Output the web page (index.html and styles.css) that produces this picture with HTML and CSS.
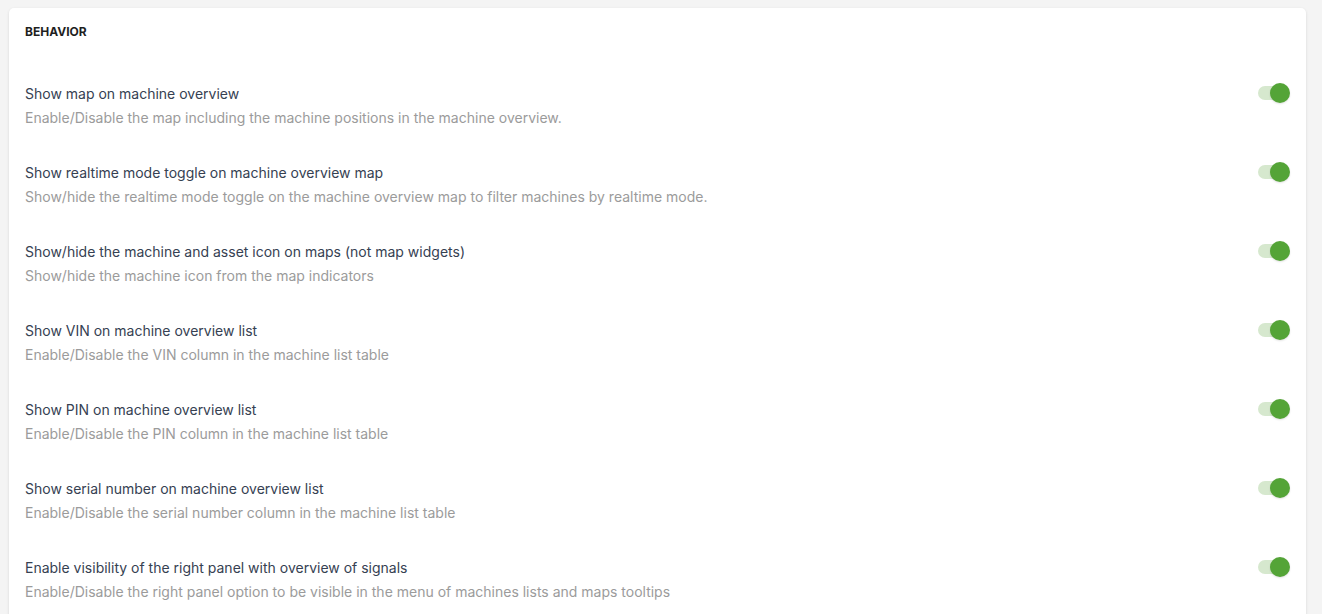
FILE: index.html
```html
<!DOCTYPE html>
<html>
<head>
<meta charset="utf-8">
<link rel="stylesheet" href="styles.css">
</head>
<body>
<div class="card">
  <div class="heading">BEHAVIOR</div>
  <div class="row">
    <div class="text">
      <div class="title">Show map on machine overview</div>
      <div class="desc">Enable/Disable the map including the machine positions in the machine overview.</div>
    </div>
    <div class="toggle"><span class="track"></span><span class="knob"></span></div>
  </div>
  <div class="row">
    <div class="text">
      <div class="title">Show realtime mode toggle on machine overview map</div>
      <div class="desc">Show/hide the realtime mode toggle on the machine overview map to filter machines by realtime mode.</div>
    </div>
    <div class="toggle"><span class="track"></span><span class="knob"></span></div>
  </div>
  <div class="row">
    <div class="text">
      <div class="title">Show/hide the machine and asset icon on maps (not map widgets)</div>
      <div class="desc">Show/hide the machine icon from the map indicators</div>
    </div>
    <div class="toggle"><span class="track"></span><span class="knob"></span></div>
  </div>
  <div class="row">
    <div class="text">
      <div class="title">Show VIN on machine overview list</div>
      <div class="desc">Enable/Disable the VIN column in the machine list table</div>
    </div>
    <div class="toggle"><span class="track"></span><span class="knob"></span></div>
  </div>
  <div class="row">
    <div class="text">
      <div class="title">Show PIN on machine overview list</div>
      <div class="desc">Enable/Disable the PIN column in the machine list table</div>
    </div>
    <div class="toggle"><span class="track"></span><span class="knob"></span></div>
  </div>
  <div class="row">
    <div class="text">
      <div class="title">Show serial number on machine overview list</div>
      <div class="desc">Enable/Disable the serial number column in the machine list table</div>
    </div>
    <div class="toggle"><span class="track"></span><span class="knob"></span></div>
  </div>
  <div class="row">
    <div class="text">
      <div class="title">Enable visibility of the right panel with overview of signals</div>
      <div class="desc">Enable/Disable the right panel option to be visible in the menu of machines lists and maps tooltips</div>
    </div>
    <div class="toggle"><span class="track"></span><span class="knob"></span></div>
  </div>
</div>
</body>
</html>
```
FILE: styles.css
```css
html, body {
  margin: 0;
  height: 100%;
  overflow: hidden;
}
body {
  background: #f4f4f4;
  padding: 8px 16px 0 9px;
  font-family: Inter, "Noto Sans", sans-serif;
  box-sizing: border-box;
}
.card {
  background: #ffffff;
  border-radius: 5px;
  box-shadow: 0 1px 3px rgba(0, 0, 0, 0.12);
  padding: 16px 16px 40px 16px;
}
.heading {
  font-size: 12px;
  font-weight: 700;
  line-height: 16px;
  color: #1f1f1f;
  margin-bottom: 26px;
}
.row {
  display: flex;
  align-items: flex-start;
  justify-content: space-between;
  padding: 18px 0 17px 0;
}
.text {
  display: flex;
  flex-direction: column;
  gap: 4px;
}
.title {
  font-size: 14px;
  line-height: 20px;
  color: #364152;
}
.desc {
  font-size: 14px;
  line-height: 20px;
  color: #9b9b9b;
}
.toggle {
  position: relative;
  width: 32px;
  height: 20px;
  margin-top: -1px;
  flex-shrink: 0;
}
.track {
  position: absolute;
  left: 0;
  top: 3px;
  width: 30px;
  height: 14px;
  border-radius: 7px;
  background: #d6e8ce;
}
.knob {
  position: absolute;
  right: 0;
  top: 0;
  width: 20px;
  height: 20px;
  border-radius: 50%;
  background: #54a437;
  box-shadow: 0 1px 2px rgba(0, 0, 0, 0.12);
}
```
